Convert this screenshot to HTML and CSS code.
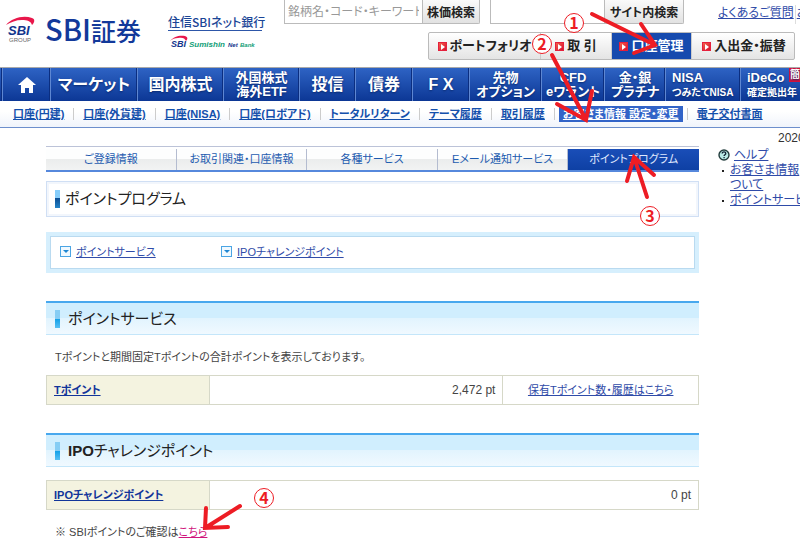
FILE: index.html
```html
<!DOCTYPE html>
<html lang="ja">
<head>
    <meta charset="utf-8">
    <title>ポイントプログラム</title>
    <link rel="stylesheet" href="styles.css">
</head>
<body>
    <header class="header">
        <a class="brand" href="#">
            <svg class="brand-mark" width="34" height="30" viewBox="0 0 34 30">
                <path d="M0 10C6 3 17 0 26 3c3 1 3 4 0 7-1-4-5-5-10-5C10 5 5 7 0 10z" fill="#e8174b"/>
                <text x="2" y="20" class="mark-sbi">SBI</text>
                <text x="3" y="27" class="mark-group">GROUP</text>
            </svg>
            <span class="brand-name">SBI<span class="brand-kanji">証券</span></span>
        </a>
        <a class="bank" href="#">
            <span class="bank-name">住信SBIネット銀行</span>
            <svg width="94" height="17" viewBox="0 0 94 17">
                <path d="M2 6C6 1 12 0 17 1c3 1 3 3 1 5-1-3-4-4-8-3C7 3 4 4 2 6z" fill="#e8174b"/>
                <text x="3" y="12" class="bank-sbi">SBI</text>
                <text x="21" y="12" class="bank-sumishin">Sumishin</text>
                <text x="60" y="12" class="bank-net">Net</text>
                <text x="72" y="12" class="bank-bank">Bank</text>
            </svg>
        </a>
        <div class="tools">
            <div class="search-row">
                <form class="search">
                    <input type="text" aria-label="銘柄検索" placeholder="銘柄名・コード・キーワード">
                    <button type="button">株価検索</button>
                </form>
                <form class="search search-site">
                    <input type="text" aria-label="サイト内検索">
                    <button type="button">サイト内検索</button>
                </form>
                <div class="help-links"><a href="#">よくあるご質問</a><a href="#">お</a></div>
            </div>
            <div class="account-menu">
                <a href="#"><i class="arrow"></i>ポートフォリオ</a>
                <a href="#"><i class="arrow"></i>取 引</a>
                <a class="current" href="#"><i class="arrow"></i>口座管理</a>
                <a href="#"><i class="arrow"></i>入出金・振替</a>
            </div>
        </div>
    </header>

    <nav class="global-nav">
        <a href="#" aria-label="ホーム">
            <svg width="18" height="16" viewBox="0 0 18 16"><path d="M9 0l9 8h-3v8h-4v-5H7v5H3V8H0z" fill="#fff"/></svg>
        </a>
        <a href="#">マーケット</a>
        <a href="#">国内株式</a>
        <a class="two" href="#">外国株式<br>海外ETF</a>
        <a href="#">投信</a>
        <a href="#">債券</a>
        <a href="#">F X</a>
        <a class="two" href="#">先物<br>オプション</a>
        <a class="two" href="#">CFD<br>eワラント</a>
        <a class="two" href="#">金・銀<br>プラチナ</a>
        <a class="two left" href="#">NISA<br><small>つみたてNISA</small></a>
        <a class="two left" href="#">iDeCo<br><small>確定拠出年</small><span class="badge">簡</span></a>
    </nav>

    <nav>
        <ul class="sub-nav">
            <li><a href="#">口座(円建)</a></li>
            <li><a href="#">口座(外貨建)</a></li>
            <li><a href="#">口座(NISA)</a></li>
            <li><a href="#">口座(ロボアド)</a></li>
            <li><a href="#">トータルリターン</a></li>
            <li><a href="#">テーマ履歴</a></li>
            <li><a href="#">取引履歴</a></li>
            <li><a class="current" href="#">お客さま情報 設定・変更</a></li>
            <li><a href="#">電子交付書面</a></li>
        </ul>
    </nav>

    <div class="layout">
        <main class="main">
            <nav class="tabs">
                <a href="#">ご登録情報</a>
                <a href="#">お取引関連・口座情報</a>
                <a href="#">各種サービス</a>
                <a href="#">Eメール通知サービス</a>
                <a class="current" href="#">ポイントプログラム</a>
            </nav>

            <h1 class="page-title">ポイントプログラム</h1>

            <div class="anchors">
                <ul>
                    <li><i class="down"></i><a href="#point">ポイントサービス</a></li>
                    <li><i class="down"></i><a href="#ipo">IPOチャレンジポイント</a></li>
                </ul>
            </div>

            <h2 class="section-title" id="point">ポイントサービス</h2>
            <p class="lead">Tポイントと期間固定Tポイントの合計ポイントを表示しております。</p>
            <table class="points">
                <tr>
                    <th scope="row"><a href="#">Tポイント</a></th>
                    <td class="value">2,472 pt</td>
                    <td class="more"><a href="#">保有Tポイント数・履歴はこちら</a></td>
                </tr>
            </table>

            <h2 class="section-title" id="ipo"><b>IPO</b>チャレンジポイント</h2>
            <table class="points">
                <tr>
                    <th scope="row"><a href="#">IPOチャレンジポイント</a></th>
                    <td class="value">0 pt</td>
                </tr>
            </table>
            <p class="note">※ SBIポイントのご確認は<a href="#">こちら</a></p>
        </main>

        <aside class="side">
            <p class="date">2020</p>
            <p class="help">
                <svg width="12" height="12" viewBox="0 0 12 12">
                    <circle cx="6" cy="6" r="5" fill="#b9ebe6" stroke="#223c3c" stroke-width="1.4"/>
                    <path d="M4.2 4.6c0-2.4 3.6-2.2 3.6-.2 0 1.4-1.7 1.2-1.7 2.6M6.1 8v1.3" fill="none" stroke="#123" stroke-width="1.3"/>
                </svg>
                <a href="#">ヘルプ</a>
            </p>
            <ul>
                <li><a href="#">お客さま情報<br>ついて</a></li>
                <li><a href="#">ポイントサービス</a></li>
            </ul>
        </aside>
    </div>

    <!-- steps 1 to 4 drawn over the page -->
    <svg class="steps" width="800" height="557" viewBox="0 0 800 557">
        <g class="strokes">
            <path d="M592 14L655 45M641 24L655 45L634 53"/>
            <path d="M552 55L586 120M557 104L586 120L592 91"/>
            <path d="M647 197L634 157M627 181L634 157L654 175"/>
            <path d="M240 506L205 528M206 508L205 528L228 527"/>
        </g>
        <g class="numbers">
            <circle cx="574" cy="23" r="9.5"/><text x="574" y="29">1</text>
            <circle cx="542" cy="44" r="9.5"/><text x="542" y="50">2</text>
            <circle cx="650" cy="216" r="9.5"/><text x="650" y="222">3</text>
            <circle cx="264" cy="498" r="9.5"/><text x="264" y="504">4</text>
        </g>
    </svg>
</body>
</html>
```

FILE: styles.css
```css
* {
    box-sizing: border-box;
}
body {
    position: relative;
    margin: 0;
    overflow-x: hidden;
    background: #fff;
    color: #444;
    font-family: "Liberation Sans", "Noto Sans CJK JP", sans-serif;
    font-size: 11px;
    line-height: 16px;
    font-feature-settings: "palt";
}
a {
    color: #2f4ba8;
}
ul {
    list-style: none;
    margin: 0;
    padding: 0;
}

/* header */
.header {
    display: flex;
    height: 67px;
    white-space: nowrap;
}
.brand {
    display: flex;
    width: 168px;
    padding: 15px 0 0 6px;
    gap: 5px;
    text-decoration: none;
}
.brand-mark {
    overflow: visible;
}
.mark-sbi {
    font: italic bold 13px "Liberation Sans", sans-serif;
    fill: #12358c;
}
.mark-group {
    font: 6px "Liberation Sans", sans-serif;
    fill: #666;
}
.brand-name {
    color: #12399a;
    font-family: "Noto Sans CJK JP", sans-serif;
    font-size: 29px;
    font-weight: 500;
    line-height: 26px;
}
.brand-kanji {
    font-size: 25px;
}
.bank {
    width: 116px;
    padding-top: 14px;
    text-decoration: none;
}
.bank-name {
    display: block;
    width: 94px;
    margin-bottom: 4px;
    border-bottom: 1px solid #2d56a8;
    color: #1a4596;
    font-family: "Noto Sans CJK JP", sans-serif;
    font-size: 12px;
    font-weight: 500;
}
.bank text {
    font: italic bold 6px "Liberation Sans", sans-serif;
    fill: #12358c;
}
.bank .bank-sbi {
    font-size: 9px;
}
.bank .bank-sumishin {
    font-size: 8px;
    fill: #12a078;
}
.bank .bank-bank {
    fill: #12a078;
}
.tools {
    flex: 1;
    min-width: 0;
}
.search-row {
    display: flex;
    height: 24px;
}
.search {
    display: flex;
    flex: none;
    width: 196px;
    margin-right: 10px;
}
.search input {
    flex: 1;
    min-width: 0;
    padding: 0 3px;
    border: 1px solid #bbb;
    border-width: 0 0 1px 1px;
    font: 12px "Liberation Sans", "Noto Sans CJK JP", sans-serif;
    font-feature-settings: "palt";
}
.search input::placeholder {
    color: #999;
}
.search button {
    width: 58px;
    padding: 0;
    border: 1px solid #bbb;
    border-width: 0 1px 1px 1px;
    border-radius: 0 0 2px 0;
    background: linear-gradient(#fafafa, #e2e2e2);
    color: #222;
    font: bold 12px "Liberation Sans", "Noto Sans CJK JP", sans-serif;
    font-feature-settings: "palt";
}
.search-site {
    width: 194px;
}
.search-site button {
    width: 80px;
}
.help-links {
    display: flex;
    margin-left: 24px;
    padding-top: 5px;
    font-size: 12px;
}
.help-links a + a {
    margin-left: 1px;
    padding-left: 1px;
    border-left: 1px solid #ddd;
}
.account-menu {
    display: grid;
    grid-template-columns: 112px 71px 80px 104px;
    width: 367px;
    height: 28px;
    margin: 8px 0 0 144px;
    border: 1px solid #bbb;
    border-radius: 2px;
    background: linear-gradient(#fff, #e4e4e4);
}
.account-menu a {
    display: flex;
    align-items: center;
    justify-content: center;
    gap: 3px;
    border-right: 1px solid #ccc;
    color: #222;
    font-size: 13px;
    font-weight: bold;
    text-decoration: none;
}
.account-menu a:last-child {
    border-right: 0;
}
.account-menu .current {
    background: #164aae;
    color: #fff;
}
.arrow {
    width: 9px;
    height: 9px;
    border: 1px solid #e5203c;
    background: linear-gradient(135deg, #f2604a, #d8102e);
}
.arrow::before {
    content: "";
    display: block;
    width: 0;
    margin: 1px 0 0 2px;
    border: 3px solid transparent;
    border-left: 4px solid #fff;
    border-right: 0;
}

/* blue navigation */
.global-nav {
    display: grid;
    grid-template-columns: 48px 87px 86px 76px 56px 57px 57px 72px 63px 61px 75px 1fr;
    height: 34px;
    padding-left: 2px;
    border-top: 1px solid #aaa;
    background: linear-gradient(#2e63c4, #0c3795);
}
.global-nav a {
    position: relative;
    display: flex;
    align-items: center;
    justify-content: center;
    min-width: 0;
    border-left: 1px solid #5e87d2;
    box-shadow: -1px 0 #0b2e80;
    color: #fff;
    font-size: 16px;
    font-weight: bold;
    text-decoration: none;
    text-shadow: 0 1px 2px #0a2a70;
    white-space: nowrap;
}
.global-nav .two {
    display: block;
    padding-top: 3px;
    font-size: 13px;
    line-height: 14px;
    text-align: center;
}
.global-nav .left {
    padding-left: 6px;
    text-align: left;
}
.global-nav small {
    font-size: 10px;
}
.badge {
    position: absolute;
    top: 0;
    right: 0;
    padding-left: 1px;
    background: #d8123c;
    font-size: 10px;
}

.sub-nav {
    display: flex;
    align-items: center;
    height: 27px;
    padding-left: 4px;
    border-bottom: 1px solid #6d8fcc;
    background: linear-gradient(#fff 40%, #f0f4fb);
    white-space: nowrap;
}
.sub-nav li {
    padding: 0 9px;
    line-height: 12px;
}
.sub-nav li + li {
    border-left: 1px solid #ccc;
}
.sub-nav li:nth-last-child(2) {
    padding: 0 4px;
}
.sub-nav a {
    color: #1450ac;
    font-weight: bold;
}
.sub-nav .current {
    padding: 2px 4px;
    background: #3264c8;
    color: #fff;
}

/* content */
.layout {
    display: grid;
    grid-template-columns: minmax(0, 1fr) 82px;
    gap: 19px;
    padding-left: 46px;
}
.main {
    padding-top: 18px;
}
.tabs {
    display: grid;
    grid-template-columns: repeat(5, 1fr);
    height: 26px;
    padding-top: 2px;
    border-top: 1px solid #bcc3d8;
    border-bottom: 2px solid #5688dc;
}
.tabs a {
    border-right: 1px solid #b4bcd0;
    background: linear-gradient(#fdfefe 50%, #ebeded 50%, #f2f3f3);
    color: #1d5cb0;
    line-height: 21px;
    text-align: center;
    text-decoration: none;
    white-space: nowrap;
}
.tabs .current {
    border-right: 0;
    background: linear-gradient(#1a4eb8, #0e40a4);
    color: #e0eaff;
}
.page-title {
    display: flex;
    align-items: center;
    gap: 5px;
    height: 36px;
    margin: 9px 0 15px;
    padding-left: 8px;
    border: 1px solid #d0dff4;
    box-shadow: inset 0 0 0 2px #f2f6fc;
    color: #222;
    font-size: 15px;
    font-weight: normal;
}
.page-title::before,
.section-title::before {
    content: "";
    width: 5px;
    height: 18px;
    background: linear-gradient(#86cdfa 45%, #0a4c92 45%, #2484c8);
}
.anchors {
    padding: 4px;
    background: #d6effd;
}
.anchors ul {
    display: flex;
    height: 33px;
    align-items: center;
    padding: 0 0 2px 9px;
    border: 1px solid #b9daf0;
    background: #fff;
}
.anchors li {
    display: flex;
    align-items: center;
    gap: 5px;
    width: 161px;
    white-space: nowrap;
}
.down {
    width: 11px;
    height: 11px;
    border: 1px solid #4ba5e4;
    background: #f0f9ff;
}
.down::before {
    content: "";
    display: block;
    width: 0;
    margin: 3px 0 0 2px;
    border: 3px solid transparent;
    border-top: 3px solid #1e86d2;
    border-bottom: 0;
}
.section-title {
    display: flex;
    align-items: center;
    height: 34px;
    margin: 28px 0 13px;
    padding-left: 9px;
    border-top: 2px solid #48a8ee;
    border-bottom: 1px solid #c4e6fa;
    background: linear-gradient(#d0eefe 50%, #e2f4fe 50%, #f0f9ff);
    color: #222;
    font-size: 15px;
    font-weight: normal;
}
.section-title::before {
    margin-right: 8px;
    background: linear-gradient(#86cdf4 50%, #12a0e8 50%, #58c0f4);
}
.lead {
    margin: 14px 0 10px 9px;
}
.points {
    width: 100%;
    border-collapse: collapse;
    table-layout: fixed;
}
.points th,
.points td {
    height: 29px;
    padding: 0 7px;
    border: 1px solid #d6d8c8;
}
.points th {
    width: 25%;
    background: #f4f3e0;
    text-align: left;
}
.points th a {
    color: #12359a;
}
.points .value {
    font-size: 12px;
    text-align: right;
}
.points .more {
    width: 30%;
    text-align: center;
}
.note {
    margin: 14px 0 0 9px;
}
.note a {
    color: #d0147c;
}

/* right column */
.side {
    padding-top: 2px;
    color: #333;
    font-size: 12px;
    white-space: nowrap;
}
.side p {
    margin: 0;
}
.side .date {
    height: 17px;
    padding-left: 60px;
    overflow: hidden;
}
.side .help {
    display: flex;
    align-items: center;
    gap: 4px;
}
.side li {
    display: flex;
    line-height: 15px;
}
.side li::before {
    content: "";
    flex: none;
    width: 2px;
    height: 2px;
    margin: 7px 6px 0 4px;
    background: #222;
}

/* step marks */
.steps {
    position: absolute;
    top: 0;
    left: 0;
    pointer-events: none;
}
.strokes {
    fill: none;
    stroke: #ed1c24;
    stroke-width: 4;
    stroke-linecap: round;
}
.numbers circle {
    fill: #fff;
    stroke: #ed1c24;
}
.numbers text {
    fill: #ed1c24;
    font: bold 16px "Noto Sans CJK JP", sans-serif;
    text-anchor: middle;
}
```
